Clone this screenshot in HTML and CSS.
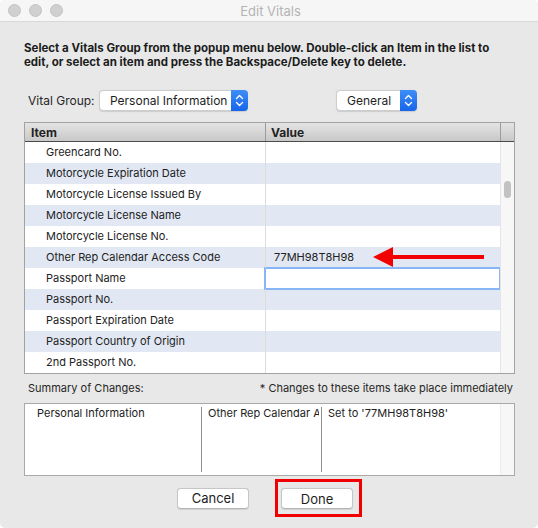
FILE: index.html
```html
<!DOCTYPE html>
<html>
<head>
<meta charset="utf-8">
<title>Edit Vitals</title>
<link rel="stylesheet" href="styles.css">
</head>
<body>
<div class="window">
  <div class="titlebar">
    <div class="lights"><span class="light"></span><span class="light"></span><span class="light"></span></div>
    <div class="title">Edit Vitals</div>
  </div>
  <div class="content">
    <p class="intro">Select a Vitals Group from the popup menu below. Double-click an Item in the list to<br>edit, or select an item and press the Backspace/Delete key to delete.</p>
    <div class="controls">
      <span class="label">Vital Group:</span>
      <div class="popup popup-group">
        <span class="popup-text">Personal Information</span>
        <span class="stepper"><svg width="17" height="21" viewBox="0 0 17 21"><path d="M5.5 8.5 L8.5 5.5 L11.5 8.5 M5.5 12.5 L8.5 15.5 L11.5 12.5" fill="none" stroke="#fff" stroke-width="1.4" stroke-linecap="round" stroke-linejoin="round"/></svg></span>
      </div>
      <div class="popup popup-general">
        <span class="popup-text">General</span>
        <span class="stepper"><svg width="17" height="21" viewBox="0 0 17 21"><path d="M5.5 8.5 L8.5 5.5 L11.5 8.5 M5.5 12.5 L8.5 15.5 L11.5 12.5" fill="none" stroke="#fff" stroke-width="1.4" stroke-linecap="round" stroke-linejoin="round"/></svg></span>
      </div>
    </div>
    <div class="table">
      <div class="thead">
        <div class="th th-item">Item</div>
        <div class="th th-value">Value</div>
        <div class="th th-corner"></div>
      </div>
      <div class="tbody">
        <div class="rows">
          <div class="row"><div class="cell item">Greencard No.</div><div class="cell value"></div></div>
          <div class="row alt"><div class="cell item">Motorcycle Expiration Date</div><div class="cell value"></div></div>
          <div class="row"><div class="cell item">Motorcycle License Issued By</div><div class="cell value"></div></div>
          <div class="row alt"><div class="cell item">Motorcycle License Name</div><div class="cell value"></div></div>
          <div class="row"><div class="cell item">Motorcycle License No.</div><div class="cell value"></div></div>
          <div class="row alt"><div class="cell item">Other Rep Calendar Access Code</div><div class="cell value annotated">77MH98T8H98<svg class="arrow" width="112" height="20" viewBox="0 0 112 20"><polygon points="0,10 20,0 20,20" fill="#f20000"/><rect x="16" y="8" width="95" height="4" fill="#f20000"/></svg></div></div>
          <div class="row"><div class="cell item">Passport Name</div><div class="cell value editing"></div></div>
          <div class="row alt"><div class="cell item">Passport No.</div><div class="cell value"></div></div>
          <div class="row"><div class="cell item">Passport Expiration Date</div><div class="cell value"></div></div>
          <div class="row alt"><div class="cell item">Passport Country of Origin</div><div class="cell value"></div></div>
          <div class="row"><div class="cell item">2nd Passport No.</div><div class="cell value"></div></div>
        </div>
        <div class="vscroll"><div class="thumb"></div></div>
      </div>
    </div>
    <div class="summary-head">
      <span>Summary of Changes:</span>
      <span>* Changes to these items take place immediately</span>
    </div>
    <div class="summary">
      <div class="scell s1">Personal Information</div>
      <div class="scell s2"><span class="clip">Other Rep Calendar Access Code</span></div>
      <div class="scell s3">Set to '77MH98T8H98'</div>
      <div class="sscroll"></div>
    </div>
    <div class="buttons">
      <button class="btn">Cancel</button>
      <div class="highlight"><button class="btn">Done</button></div>
    </div>
  </div>
</div>
</body>
</html>
```
FILE: styles.css
```css
html, body {
  margin: 0;
  padding: 0;
  background: #ffffff;
}
body {
  font-family: Inter, "Noto Sans", sans-serif;
  color: #222;
}
.window {
  width: 538px;
  height: 528px;
  background: #e8e8e8;
  border-radius: 5px;
  overflow: hidden;
}
.titlebar {
  height: 21px;
  background: #f6f6f6;
  border-bottom: 1px solid #d9d9d9;
  display: flex;
  align-items: center;
}
.lights {
  display: flex;
  gap: 8px;
  padding-left: 8px;
}
.light {
  width: 11px;
  height: 11px;
  border-radius: 50%;
  background: #d0d0d0;
  border: 0.5px solid #c2c2c2;
}
.title {
  flex: 1;
  text-align: center;
  margin-left: -60px;
  font-size: 13px;
  color: #b4b4b4;
}
.content {
  padding: 0 23px 0 24px;
}
.intro {
  margin: 19px 0 0 0;
  font-size: 11.5px;
  line-height: 14px;
  font-weight: 700;
  color: #1c1c1c;
  white-space: nowrap;
}
.controls {
  margin-top: 21px;
  height: 21px;
  display: flex;
  align-items: center;
  font-size: 12px;
}
.label {
  width: 75px;
  padding-left: 4px;
  box-sizing: border-box;
  color: #262626;
}
.popup {
  height: 21px;
  box-sizing: border-box;
  display: flex;
  align-items: center;
  background: #fff;
  border: 1px solid #cdcdcd;
  border-radius: 4px;
  box-shadow: 0 0.5px 1px rgba(0,0,0,0.12);
}
.popup-group { width: 149px; }
.popup-general { width: 81px; margin-left: 88px; }
.popup-text {
  flex: 1;
  padding-left: 10px;
  color: #1e1e1e;
}
.stepper {
  width: 17px;
  height: 21px;
  margin: -1px -1px -1px 0;
  border-radius: 0 4px 4px 0;
  background: linear-gradient(#3e8ef8, #1765ea);
  display: flex;
}
.table {
  margin-top: 11px;
  border: 1px solid #a2a2a2;
  background: #fff;
}
.thead {
  display: flex;
  height: 18px;
  background: linear-gradient(#e4e4e4, #c8c8c8);
  border-bottom: 1px solid #4a4a4a;
  font-size: 12px;
  font-weight: 700;
  color: #222;
}
.th {
  display: flex;
  align-items: center;
}
.th-item { width: 240px; padding-left: 6px; box-sizing: border-box; }
.th-value { width: 235px; padding-left: 5px; box-sizing: border-box; border-left: 1px solid #9b9b9b; }
.th-corner { flex: 1; border-left: 1px solid #9b9b9b; }
.tbody {
  display: flex;
}
.rows {
  width: 475px;
}
.row {
  display: flex;
  height: 21px;
  font-size: 11px;
  color: #222;
}
.row.alt { background: #e1e8f4; }
.cell {
  display: flex;
  align-items: center;
  box-sizing: border-box;
  padding-bottom: 1px;
}
.item { width: 240px; padding-left: 21px; }
.value { width: 235px; padding-left: 8px; border-left: 1px solid #dcdcdc; }
.annotated { position: relative; }
.arrow {
  position: absolute;
  left: 107px;
  top: 0;
}
.editing {
  background: #fff;
  outline: 2px solid #86b6f6;
  outline-offset: -1px;
}
.vscroll {
  width: 15px;
  box-sizing: border-box;
  background: #f7f7f7;
  border-left: 1px solid #e6e6e6;
  padding: 39px 0 0 3px;
}
.thumb {
  width: 7px;
  height: 17px;
  border-radius: 4px;
  background: #c2c2c2;
}
.summary-head {
  margin-top: 7px;
  display: flex;
  justify-content: space-between;
  font-size: 11px;
  line-height: 14px;
  padding: 0 2px 0 4px;
  color: #262626;
}
.summary {
  margin-top: 8px;
  height: 73px;
  box-sizing: border-box;
  border: 1px solid #a9a9a9;
  background: #fff;
  display: flex;
  font-size: 11px;
  color: #222;
}
.scell {
  padding: 0 0 0 6px;
  margin: 3px 0;
  line-height: 12px;
  white-space: nowrap;
  box-sizing: border-box;
}
.s1 { width: 176px; padding-left: 12px; }
.s2 { width: 120px; border-left: 1px solid #8e8e8e; }
.clip {
  display: block;
  width: 111px;
  overflow: hidden;
}
.s3 { width: 179px; border-left: 1px solid #8e8e8e; }
.sscroll {
  flex: 1;
  background: #f7f7f7;
  border-left: 1px solid #ececec;
}
.buttons {
  margin-top: 3px;
  display: flex;
  justify-content: center;
  align-items: center;
  gap: 26px;
}
.btn {
  width: 72px;
  height: 21px;
  box-sizing: border-box;
  background: #fff;
  border: 1px solid #c6c6c6;
  border-bottom-color: #b4b4b4;
  border-radius: 4px;
  font-family: Inter, "Noto Sans", sans-serif;
  font-size: 13px;
  color: #1e1e1e;
  padding: 0;
  box-shadow: 0 0.5px 1px rgba(0,0,0,0.1);
}
.highlight {
  border: 3px solid #f00000;
  padding: 6px 6px 5px 3px;
  display: flex;
}
```
